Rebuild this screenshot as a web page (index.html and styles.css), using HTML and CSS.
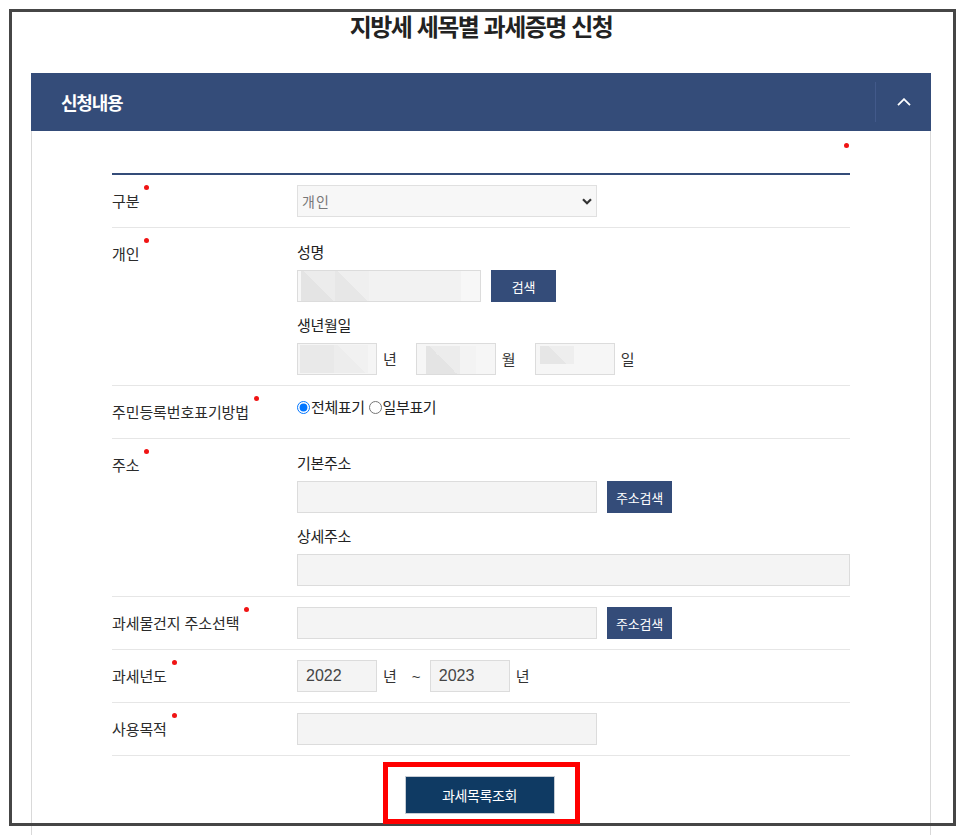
FILE: index.html
```html
<!DOCTYPE html>
<html lang="ko">
<head>
<meta charset="utf-8">
<title>지방세 세목별 과세증명 신청</title>
<link rel="stylesheet" href="styles.css">
</head>
<body>
<div class="page">
  <h1 class="title">지방세 세목별 과세증명 신청</h1>
  <section class="panel">
    <div class="panel-head">
      <h2 class="panel-title">신청내용</h2>
      <button class="toggle" type="button" aria-label="접기">
        <svg width="14" height="8" viewBox="0 0 14 8"><path d="M1 7.2 L7 1.2 L13 7.2" stroke="#fff" stroke-width="1.8" fill="none"/></svg>
      </button>
    </div>
    <div class="panel-body">
      <div class="legend"><span class="dot"></span></div>
      <div class="form">
        <div class="row">
          <div class="label"><span class="req">구분</span></div>
          <div class="field">
            <div class="select-wrap">
              <select class="select"><option>개인</option></select>
              <svg class="select-arrow" width="10" height="7" viewBox="0 0 10 7"><path d="M1 1.3 L5 5.3 L9 1.3" stroke="#333" stroke-width="2.2" fill="none"/></svg>
            </div>
          </div>
        </div>
        <div class="row">
          <div class="label"><span class="req">개인</span></div>
          <div class="field stack">
            <div class="sub">성명</div>
            <div class="line">
              <input class="inp w184 mask-name" type="text">
              <button class="btn" type="button">검색</button>
            </div>
            <div class="sub">생년월일</div>
            <div class="line">
              <input class="inp w80 mask-y" type="text"><span class="unit">년</span>
              <input class="inp w80 mask-m" type="text"><span class="unit">월</span>
              <input class="inp w80 mask-d" type="text"><span class="unit">일</span>
            </div>
          </div>
        </div>
        <div class="row">
          <div class="label"><span class="req">주민등록번호표기방법</span></div>
          <div class="field radios">
            <label class="radio"><input type="radio" name="rrn" checked>전체표기</label>
            <label class="radio"><input type="radio" name="rrn">일부표기</label>
          </div>
        </div>
        <div class="row">
          <div class="label"><span class="req">주소</span></div>
          <div class="field stack">
            <div class="sub">기본주소</div>
            <div class="line">
              <input class="inp w300" type="text">
              <button class="btn" type="button">주소검색</button>
            </div>
            <div class="sub">상세주소</div>
            <div class="line">
              <input class="inp wfull" type="text">
            </div>
          </div>
        </div>
        <div class="row">
          <div class="label"><span class="req">과세물건지 주소선택</span></div>
          <div class="field line">
            <input class="inp w300" type="text">
            <button class="btn" type="button">주소검색</button>
          </div>
        </div>
        <div class="row">
          <div class="label"><span class="req">과세년도</span></div>
          <div class="field line">
            <input class="inp w80 num" type="text" value="2022"><span class="unit short">년</span><span class="tilde">~</span><input class="inp w80 num" type="text" value="2023"><span class="unit">년</span>
          </div>
        </div>
        <div class="row">
          <div class="label"><span class="req">사용목적</span></div>
          <div class="field line">
            <input class="inp w300" type="text">
          </div>
        </div>
      </div>
      <div class="actions">
        <div class="highlight"><button class="btn-submit" type="button">과세목록조회</button></div>
      </div>
    </div>
  </section>
</div>
<div class="frame"></div>
</body>
</html>
```
FILE: styles.css
```css
html, body {
  margin: 0;
  padding: 0;
  background: #fff;
}
body {
  font-family: "Noto Sans CJK KR", "Noto Sans", sans-serif;
  color: #333;
}
.page {
  padding-top: 9px;
}
.title {
  margin: 0;
  width: 900px;
  margin-left: 31px;
  text-align: center;
  font-size: 24px;
  line-height: 34px;
  font-weight: 700;
  letter-spacing: -1.5px;
  color: #222;
}
.panel {
  width: 900px;
  margin: 30px 0 0 31px;
}
.panel-head {
  display: flex;
  align-items: center;
  height: 58px;
  background: #344c79;
  padding-left: 30px;
}
.panel-title {
  flex: 1;
  margin: 0;
  font-size: 18px;
  font-weight: 700;
  letter-spacing: -1.2px;
  color: #fff;
  line-height: 22px;
}
.toggle {
  width: 56px;
  height: 40px;
  border: 0;
  border-left: 1px solid #42598a;
  background: transparent;
  padding: 0;
  display: flex;
  align-items: center;
  justify-content: center;
  cursor: pointer;
}
.panel-body {
  border-left: 1px solid #d9d9d9;
  border-right: 1px solid #d9d9d9;
  padding: 0 80px 60px;
}
.legend {
  height: 42px;
  display: flex;
  justify-content: flex-end;
}
.dot {
  width: 5px;
  height: 5px;
  border-radius: 50%;
  background: #f01414;
  margin-top: 12px;
  margin-right: 1px;
}
.form {
  border-top: 2px solid #344c79;
}
.row {
  display: grid;
  grid-template-columns: 185px 1fr;
  padding: 10px 0;
  border-bottom: 1px solid #e6e6e6;
}
.label {
  padding-top: 5px;
  line-height: 22px;
  font-size: 15px;
  letter-spacing: -0.1px;
  color: #2b2b2b;
}
.req {
  position: relative;
}
.req::after {
  content: "";
  position: absolute;
  right: -10px;
  top: -5px;
  width: 5px;
  height: 5px;
  border-radius: 50%;
  background: #f01414;
}
.field {
  min-width: 0;
  min-height: 32px;
}
.line {
  display: flex;
  align-items: center;
}
.stack .sub {
  padding-top: 3px;
  line-height: 22px;
  margin-bottom: 7px;
  font-size: 15px;
  letter-spacing: -0.3px;
  color: #222;
}
.stack .line + .sub {
  margin-top: 9px;
}
.select-wrap {
  position: relative;
  width: 300px;
}
.select {
  display: block;
  width: 300px;
  height: 32px;
  box-sizing: border-box;
  -webkit-appearance: none;
  appearance: none;
  background-color: #f7f7f7;
  border: 1px solid #e0e0e0;
  border-radius: 0;
  color: #777;
  font-family: "Noto Sans CJK KR", sans-serif;
  font-size: 14px;
  padding: 0 0 0 4px;
  letter-spacing: 1px;
}
.select-arrow {
  position: absolute;
  right: 5px;
  top: 13px;
  pointer-events: none;
}
.inp {
  height: 32px;
  box-sizing: border-box;
  border: 1px solid #dcdcdc;
  background: #f4f4f4;
  margin: 0;
  padding: 0 8px;
  font-family: "Liberation Sans", Arial, sans-serif;
  font-size: 16px;
  color: #444;
}
.w80 { width: 80px; }
.w184 { width: 184px; }
.w300 { width: 300px; }
.wfull { width: 553px; }
.mask-name {
  background:
    linear-gradient(45deg, #e4e4e4 50%, #ececec 50%) 3px 0 / 34px 100% no-repeat,
    linear-gradient(45deg, #e7e7e7 50%, #efefef 50%) 37px 0 / 34px 100% no-repeat,
    linear-gradient(#f2f2f2, #f2f2f2) 71px 0 / 92px 100% no-repeat,
    #f7f7f7;
}
.mask-y {
  background:
    linear-gradient(#e9e9e9, #e9e9e9) 2px 1px / 34px 28px no-repeat,
    linear-gradient(45deg, #ededed 50%, #f1f1f1 50%) 36px 1px / 34px 28px no-repeat,
    #f5f5f5;
}
.mask-m {
  background:
    linear-gradient(45deg, #e4e4e4 50%, #ececec 50%) 9px 2px / 34px 28px no-repeat,
    linear-gradient(#f3f3f3, #f3f3f3) 43px 2px / 16px 28px no-repeat,
    #f6f6f6;
}
.mask-d {
  background:
    linear-gradient(45deg, #e6e6e6 50%, #eeeeee 50%) 4px 2px / 34px 18px no-repeat,
    #f6f6f6;
}
.unit {
  font-size: 15px;
  color: #333;
  margin: 0 19px 0 6px;
  line-height: 22px;
}
.unit.short {
  margin-right: 15px;
}
.tilde {
  font-family: "Liberation Sans", Arial, sans-serif;
  font-size: 15px;
  color: #333;
  width: 9px;
  margin-right: 9px;
}
.btn {
  height: 32px;
  width: 65px;
  margin-left: 10px;
  border: 0;
  background: #344c79;
  color: #fff;
  font-family: "Noto Sans CJK KR", sans-serif;
  font-size: 13px;
  letter-spacing: -0.2px;
  padding: 0;
  cursor: pointer;
}
.radios {
  display: flex;
  align-items: flex-start;
  line-height: 22px;
  font-size: 15px;
  letter-spacing: -0.4px;
  color: #222;
}
.radio {
  display: flex;
  align-items: center;
  height: 22px;
  margin-right: 4px;
}
.radio input {
  margin: 0 1px 0 0;
  width: 13px;
  height: 13px;
}
.actions {
  padding-top: 6px;
  text-align: center;
}
.highlight {
  display: inline-block;
  position: relative;
  z-index: 2;
  border: 5px solid #ff0000;
  padding: 9px 20px 5px 17px;
  line-height: 0;
}
.btn-submit {
  width: 150px;
  height: 38px;
  background: #0f3a63;
  border: 1px solid #c6ccd4;
  color: #fff;
  font-family: "Noto Sans CJK KR", sans-serif;
  font-size: 14px;
  letter-spacing: -0.4px;
  padding: 0;
  cursor: pointer;
}
.frame {
  position: absolute;
  left: 9px;
  top: 9px;
  width: 947px;
  height: 817px;
  box-sizing: border-box;
  border: 3px solid #464646;
  z-index: 1;
  pointer-events: none;
}
```
